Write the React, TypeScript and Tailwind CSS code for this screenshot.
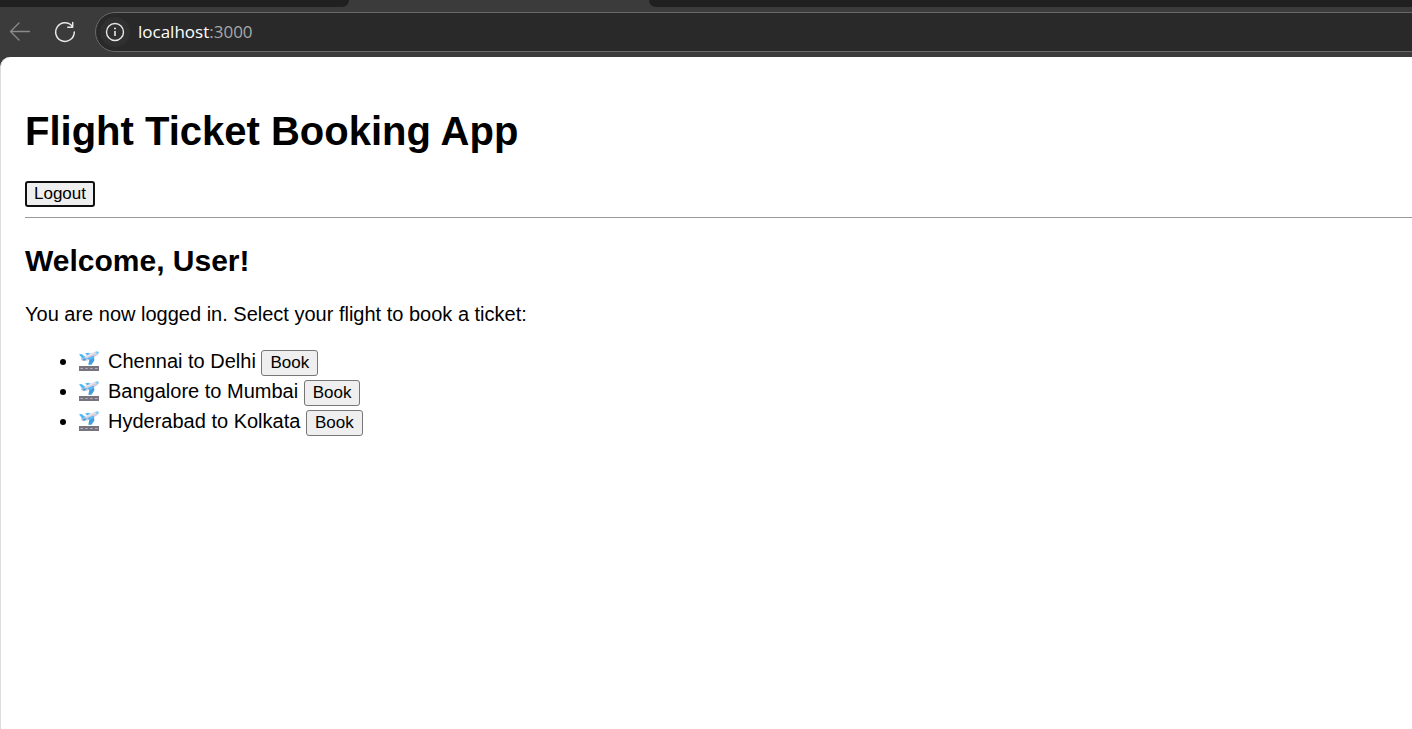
const flights = ["Chennai to Delhi", "Bangalore to Mumbai", "Hyderabad to Kolkata"];

function Departure() {
  return (
    <svg width="20" height="20" viewBox="0 0 20 20" role="img" aria-label="Departing airplane" className="mr-[9px] inline-block align-[-3px]">
      <rect x="0" y="15" width="20" height="5" fill="#77747f" />
      <path d="M1.500 17.500h2.500M6.300 17.500h2.500M11.100 17.500h2.500M16 17.500h2.500" stroke="#b5b2bd" strokeWidth="1" />
      <path d="M6 2.400l3-.6 5.500 2.200-4 2z" fill="#4bb9f5" />
      <path d="M2 8.200C2 7 3 6.300 4.500 5.700L15 1.200c2-.9 4.200-1 4.800-.2.500.9-.9 2.900-2.800 4L9.500 9c-2.500 1.200-7.500 1.600-7.500-.8z" fill="#d0cbdd" />
      <path d="M3 6.500L15 1.500c1.500-.7 3-.9 4-.7-2 1.500-9 4.700-13 5.800z" fill="#e6e3ef" />
      <path d="M16 .9c1.800-.6 3.400-.5 3.800.1.300.7-.4 1.600-1.400 2.400-.5-.9-1.300-1.700-2.400-2.500z" fill="#74d2f7" />
      <path d="M0 3.600c1.200-.8 2.400-.8 3.300-.1l3 2.500-3 1.500z" fill="#4bb9f5" />
      <path d="M3.500 7.800L8 7.200 6 9.400l-2 .1z" fill="#3a9fe4" />
      <path d="M8.500 7.200l6.500-2.400.3 4.700-2.800 4.200H9.300L10.300 9z" fill="#3f9fe0" />
      <path d="M8.500 7.200l6.500-2.400v2L11 9z" fill="#58bdf4" />
    </svg>
  );
}

function BrowserBar() {
  return (
    <header className="overflow-hidden bg-[#3b3b3b]">
      <div className="flex h-[7px]">
        <div className="w-[349px] rounded-br-lg bg-[#202020]" />
        <div className="w-[300px]" />
        <div className="flex-1 rounded-bl-lg bg-[#202020]" />
      </div>
      <div className="flex h-[50px] items-center">
        <button type="button" aria-label="Back" className="ml-[9px] text-[#8a8a8a]">
          <svg width="22" height="20" viewBox="0 0 22 20" fill="none" stroke="currentColor" strokeWidth="1.3" strokeLinecap="round" strokeLinejoin="round">
            <path d="M20.500 9.500H1.500M10 1L1.500 9.500 10 18" />
          </svg>
        </button>
        <button type="button" aria-label="Refresh" className="ml-[23px] text-[#e8e8e8]">
          <svg width="22" height="22" viewBox="0 0 22 22" fill="none" stroke="currentColor" strokeWidth="1.5" strokeLinecap="round" strokeLinejoin="round">
            <path d="M20.300 11A9.300 9.300 0 1 1 18.300 5.300M18.700 1.500v4.800h-5" />
          </svg>
        </button>
        <div className="-mr-6 ml-[19px] flex h-10 flex-1 items-center rounded-full border border-[#696969] bg-[#292929] pl-1">
          <button type="button" aria-label="View site information" className="flex size-[30px] items-center justify-center rounded-full bg-[#303030] text-[#e8e8e8]">
            <svg width="20" height="20" viewBox="0 0 20 20" fill="none" stroke="currentColor" strokeWidth="1.4">
              <circle cx="10" cy="10" r="8.500" />
              <path d="M10 9v5" strokeWidth="1.600" />
              <circle cx="10" cy="6.500" r="1" fill="currentColor" stroke="none" />
            </svg>
          </button>
          <div className="ml-2 pb-px font-['Open_Sans','Noto_Sans',sans-serif] text-[17px] leading-6 text-[#a8a8a8]">
            <span className="text-white">localhost</span>:3000
          </div>
        </div>
      </div>
    </header>
  );
}

export default function App() {
  return (
    <div className="flex min-h-screen flex-col bg-[#3b3b3b] font-['Liberation_Sans',Arial,sans-serif] text-xl text-black">
      <BrowserBar />
      <main className="flex-1 rounded-tl-[10px] border-l border-[#dcdcdc] bg-white pt-[51px] pl-6">
        <h1 className="text-[40px] leading-[46px] font-bold">Flight Ticket Booking App</h1>
        <button type="button" className="mt-[27px] block h-[26px] rounded-[3px] border-2 border-[#101010] bg-[#efefef] px-[7px] text-[17px] leading-[22px]">
          Logout
        </button>
        <hr className="mt-[10px] border-t border-[#9a9a9a]" />
        <h2 className="mt-[26px] text-[30px] leading-[34px] font-bold">Welcome, User!</h2>
        <p className="mt-6 leading-6">You are now logged in. Select your flight to book a ticket:</p>
        <ul className="mt-5 list-disc pl-[54px]">
          {flights.map((route) => (
            <li key={route} className="h-[30px] leading-[30px]">
              <Departure />
              {route}{" "}
              <button type="button" aria-label={`Book ${route}`} className="h-[26px] rounded-[3px] border border-[#767676] bg-[#efefef] px-2 text-[17px] leading-6">
                Book
              </button>
            </li>
          ))}
        </ul>
      </main>
    </div>
  );
}
